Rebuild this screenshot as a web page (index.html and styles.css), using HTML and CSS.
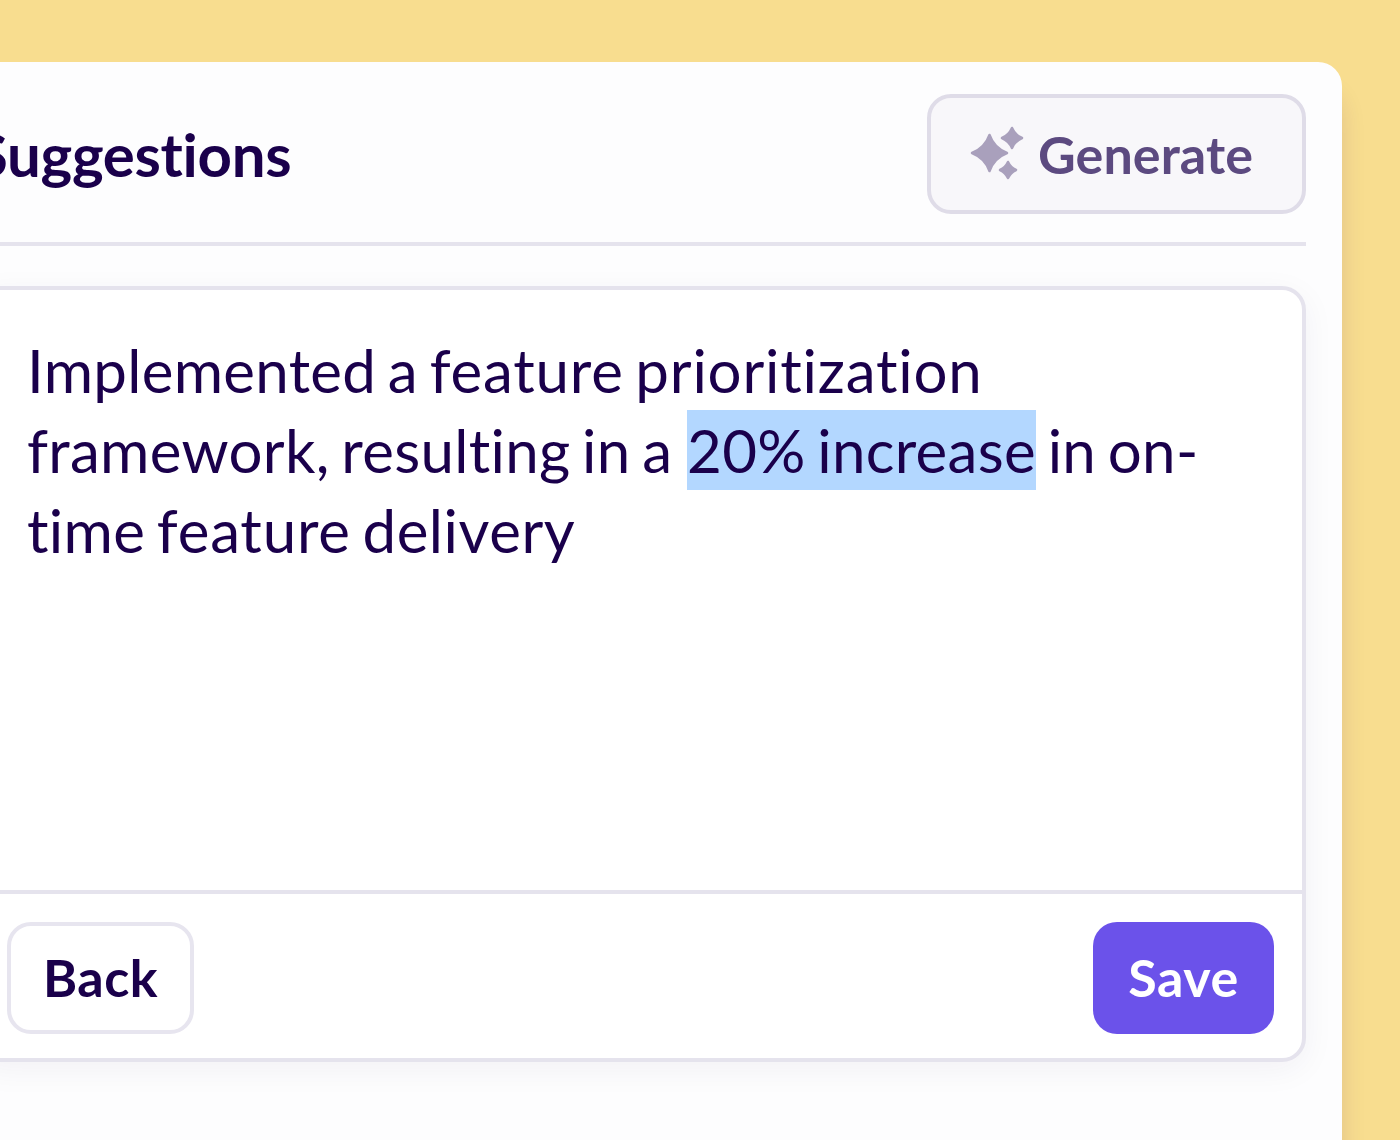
FILE: index.html
```html
<!DOCTYPE html>
<html lang="en">
<head>
<meta charset="utf-8">
<title>Suggestions</title>
<link rel="stylesheet" href="styles.css">
</head>
<body>
<main class="card">
  <header class="card-header">
    <h1 class="title">Suggestions</h1>
    <button class="generate" type="button">
      <svg class="sparkle" viewBox="0 0 56 56" aria-hidden="true">
        <path d="M20.500 9Q25 22 38 27Q25 32 20.500 45Q16 32 3 27Q16 22 20.500 9Z"/>
        <path d="M43 2Q46 9 53 12Q46 15 43 22Q40 15 33 12Q40 9 43 2Z"/>
        <path d="M39 36Q41.500 41.500 47 44Q41.500 46.500 39 52Q36.500 46.500 31 44Q36.500 41.500 39 36Z"/>
      </svg>
      <span>Generate</span>
    </button>
  </header>
  <section class="editor">
    <p class="editor-text">Implemented a <span class="wide">feature</span> <span class="wide">prioritization</span> framework, resulting in a <span class="selected">20% increase</span> in on-time <span class="wide">feature</span> <span class="wide last-word">delivery</span></p>
    <footer class="editor-footer">
      <button class="btn btn-back" type="button">Back</button>
      <button class="btn btn-save" type="button">Save</button>
    </footer>
  </section>
</main>
</body>
</html>
```
FILE: styles.css
```css
* { box-sizing: border-box; }
html, body { margin: 0; height: 1140px; overflow: hidden; }
body {
  background: #f8dd8f;
  padding-top: 62px;
  font-family: Lato, "Liberation Sans", sans-serif;
  font-variant-ligatures: none;
  color: #1a004b;
}
.card {
  width: 1403px;
  height: 1078px;
  margin-left: -61px;
  padding: 32px 36px;
  background: #fdfdfe;
  border-radius: 24px 24px 0 0;
  box-shadow: 0 30px 24px rgba(60, 20, 90, 0.12);
}
.card-header {
  display: flex;
  align-items: center;
  justify-content: space-between;
  padding-bottom: 28px;
  border-bottom: 4px solid #e5e3ed;
}
.title { margin: 0; font-size: 60px; line-height: 80px; font-weight: 700; letter-spacing: -0.3px; }
.generate {
  display: flex;
  align-items: center;
  gap: 13px;
  height: 120px;
  width: 379px;
  padding: 0 48px 0 38px;
  border: 4px solid #dfdce8;
  border-radius: 24px;
  background: #f8f7fa;
  color: #5c4a80;
  font: 700 52px/64px Lato, "Liberation Sans", sans-serif;
  font-variant-ligatures: none;
  letter-spacing: 0.1px;
}
.sparkle { width: 56px; height: 56px; flex: none; fill: #a9a0bc; stroke: #a9a0bc; stroke-width: 2.5; stroke-linejoin: round; }
.editor {
  margin-top: 40px;
  height: 776px;
  display: flex;
  flex-direction: column;
  background: #fff;
  border: 4px solid #e5e3ed;
  border-radius: 24px;
  box-shadow: 0 8px 32px rgba(30, 10, 80, 0.05);
}
.editor-text {
  flex: 1;
  margin: 0;
  padding: 40px 48px 0;
  font-size: 60px;
  line-height: 80px;
  letter-spacing: 0.3px;
  word-spacing: -4px;
}
.wide { letter-spacing: 0.8px; }
.last-word { letter-spacing: 0.55px; }
.selected { display: inline-block; margin-left: 3px; background: #b3d7ff; }
.editor-footer {
  display: flex;
  justify-content: space-between;
  padding: 28px 28px 24px;
  border-top: 4px solid #e5e3ed;
}
.btn {
  height: 112px;
  padding: 0 0 3px;
  border-radius: 24px;
  font: 700 52px/64px Lato, "Liberation Sans", sans-serif;
  font-variant-ligatures: none;
  letter-spacing: 0.5px;
}
.btn-back { width: 187px; background: #fff; border: 4px solid #e7e5ef; color: #1a004b; }
.btn-save { width: 181px; background: #6b52ea; border: 0; color: #fff; }
```
